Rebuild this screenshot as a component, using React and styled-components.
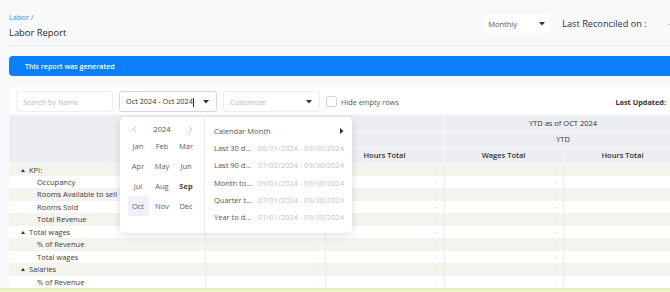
import React from 'react'
import styled, { createGlobalStyle } from 'styled-components'
import { ChevronLeft, ChevronRight } from 'lucide-react'

const GlobalStyle = createGlobalStyle`
    body {
        margin: 0;
        background: #f8f9fb;
        font-family: 'Open Sans', 'Noto Sans', sans-serif;
        overflow: hidden;
    }
`

const Page = styled.div`
    width: 670px;
    height: 292px;
    overflow: hidden;
    display: flex;
    flex-direction: column;
`

const Main = styled.div`
    padding-left: 9px;
    width: 673px;
    flex: 1;
`

// top bar with title + reconcile info
const Header = styled.div`
    display: flex;
    justify-content: space-between;
    border-bottom: 1px solid #e8eaed;
    height: 45px;
`

const TitleBlock = styled.div`
    padding-top: 12px;
`

const Crumb = styled.div`
    font-size: 7.4px;
    line-height: 11px;
    color: #3f8cf2;
`

const Title = styled.div`
    margin-top: 3px;
    font-size: 9.4px;
    line-height: 13px;
    color: #2a2a2a;
`

const HeaderRight = styled.div`
    display: flex;
    align-items: center;
    height: 19px;
    margin-top: 14px;
    margin-right: 11px;
    gap: 11px;
`

const PeriodSelect = styled.div`
    width: 68px;
    height: 19px;
    box-sizing: border-box;
    background: #fff;
    border-radius: 4px;
    display: flex;
    align-items: center;
    justify-content: space-between;
    padding: 0 6px 0 5px;
    font-size: 7.5px;
    color: #555;
`

const Reconciled = styled.div`
    font-size: 9.2px;
    color: #333;
`

const Muted = styled.span`
    margin-left: 19px;
    color: #aaa;
    font-size: 9px;
`

const Banner = styled.div`
    margin-top: 10px;
    height: 20px;
    background: #0b7ef9;
    border-radius: 4px 0 0 4px;
    display: flex;
    align-items: center;
    padding-left: 16px;
    font-size: 7.1px;
    font-weight: 600;
    color: #fff;
`

const Card = styled.div`
    margin-top: 11px;
    background: #fff;
    border-radius: 4px 0 0 0;
`

const Filters = styled.div`
    display: flex;
    align-items: center;
    gap: 6px;
    padding: 4px 16px 3px 7px;
`

const Field = styled.div`
    position: relative;
    width: ${p => p.w}px;
    height: 21px;
    box-sizing: border-box;
    border: 1px solid ${p => p.focus ? '#d3d4f4' : '#eceef1'};
    border-radius: 3px;
    display: flex;
    align-items: center;
    justify-content: space-between;
    padding: 0 7px 0 6px;
    font-size: 7.3px;
    color: ${p => p.muted ? '#b5b9c0' : '#333'};
`

const Cursor = styled.span`
    display: inline-block;
    width: 1px;
    height: 9px;
    background: #333;
    vertical-align: middle;
    margin-left: 0.5px;
`

const Check = styled.div`
    width: 11px;
    height: 11px;
    box-sizing: border-box;
    border: 1px solid #cfd2d7;
    border-radius: 2px;
    margin-right: -2px;
`

const CheckLabel = styled.span`
    font-size: 7.3px;
    color: #555;
`

const Updated = styled.span`
    margin-left: auto;
    font-size: 7.3px;
    font-weight: 700;
    color: #333;
`

// date range dropdown
const Popup = styled.div`
    position: absolute;
    left: 0px;
    top: 25px;
    width: 232px;
    height: 116px;
    background: #fff;
    border-radius: 5px;
    box-shadow: 0 2px 10px rgba(0, 0, 0, 0.13);
    display: flex;
    z-index: 5;
    color: #555;
    font-size: 7.5px;
`

const MonthPane = styled.div`
    width: 85px;
    border-right: 1px solid #eeeff1;
    padding: 5px 0 0 6px;
    box-sizing: border-box;
`

const YearNav = styled.div`
    display: grid;
    grid-template-columns: repeat(3, 28px);
    margin-left: -6px;
    height: 14px;
    align-items: center;
    justify-items: center;
    color: #555;
`

const MonthGrid = styled.div`
    display: grid;
    grid-template-columns: repeat(3, 24px);
    grid-auto-rows: 20px;
    justify-items: center;
    align-items: center;
`

const Month = styled.div`
    width: 21px;
    height: 20px;
    display: flex;
    align-items: center;
    justify-content: center;
    border-radius: 3px;
    background: ${p => p.active ? '#f0f0fb' : 'transparent'};
    font-weight: ${p => p.bold ? 700 : 400};
    color: ${p => p.bold ? '#444' : '#5e5e5e'};
`

const RangePane = styled.div`
    flex: 1;
    padding: 5px 9px 0 9px;
`

const RangeRow = styled.div`
    display: flex;
    align-items: center;
    height: 17.3px;
    justify-content: ${p => p.head ? 'space-between' : 'flex-start'};
`

const RangeLabel = styled.span`
    width: 44px;
    white-space: nowrap;
`

const RangeDates = styled.span`
    color: #c0c3c8;
    white-space: nowrap;
`

// report table
const Table = styled.table`
    border-collapse: collapse;
    table-layout: fixed;
    width: 673px;
    font-size: 7.5px;
    color: #333;
`

const Th = styled.th`
    background: #eceef1;
    height: 16px;
    padding: 0;
    font-weight: ${p => p.strong ? 600 : 400};
    border: 1px solid #f6f7f8;
    border-top: none;
    border-left: ${p => p.first ? 'none' : '1px solid #f6f7f8'};
    text-align: center;
    box-sizing: border-box;
`

const Tr = styled.tr`
    background: ${p => p.odd ? '#f4f4ef' : '#fff'};
    height: 12.5px;
`

const NameCell = styled.td`
    padding: 0 0 0 ${p => p.group ? 12 : 28}px;
    line-height: 12px;
    color: #3c3c3c;
    white-space: nowrap;
`

const Caret = styled.span`
    display: inline-block;
    width: 0;
    height: 0;
    border-left: 2.5px solid transparent;
    border-right: 2.5px solid transparent;
    border-bottom: 3px solid #333;
    margin-right: 4px;
    vertical-align: 1px;
`

const ValCell = styled.td`
    padding: 0 6px 0 0;
    text-align: right;
    line-height: 12px;
    font-size: 6px;
    color: #a7a7a7;
    border-left: 1px solid #ebebeb;
`

const Footer = styled.div`
    height: 4px;
    background: linear-gradient(#e6eeb4, #f2f6d0);
`

const DownCaret = () => (
    <svg width="6" height="4" viewBox="0 0 6 4">
        <path d="M0 0 L6 0 L3 3.5 Z" fill="#333" />
    </svg>
)

const RightCaret = () => (
    <svg width="4" height="6" viewBox="0 0 4 6">
        <path d="M0 0 L3.5 3 L0 6 Z" fill="#333" />
    </svg>
)

const months = ['Jan', 'Feb', 'Mar', 'Apr', 'May', 'Jun', 'Jul', 'Aug', 'Sep', 'Oct', 'Nov', 'Dec']

const ranges = [
    ['Last 30 d...', '08/31/2024 - 09/30/2024'],
    ['Last 90 d...', '07/02/2024 - 09/30/2024'],
    ['Month to...', '09/01/2024 - 09/30/2024'],
    ['Quarter t...', '07/01/2024 - 09/30/2024'],
    ['Year to d...', '01/01/2024 - 09/30/2024'],
]

// group rows have no indent + caret
const rows = [
    { name: 'KPI:', group: true },
    { name: 'Occupancy' },
    { name: 'Rooms Available to sell' },
    { name: 'Rooms Sold' },
    { name: 'Total Revenue' },
    { name: 'Total wages', group: true },
    { name: '% of Revenue' },
    { name: 'Total wages' },
    { name: 'Salaries', group: true },
    { name: '% of Revenue' },
]

const DatePicker = () => (
    <Popup>
        <MonthPane>
            <YearNav>
                <ChevronLeft size={9} strokeWidth={1.5} color="#888" />
                <span>2024</span>
                <ChevronRight size={9} strokeWidth={1.5} color="#888" />
            </YearNav>
            <MonthGrid>
                {months.map(m => (
                    <Month key={m} active={m === 'Oct'} bold={m === 'Sep'}>{m}</Month>
                ))}
            </MonthGrid>
        </MonthPane>
        <RangePane>
            <RangeRow head>
                <span>Calendar Month</span>
                <RightCaret />
            </RangeRow>
            {ranges.map(([label, dates]) => (
                <RangeRow key={label}>
                    <RangeLabel>{label}</RangeLabel>
                    <RangeDates>{dates}</RangeDates>
                </RangeRow>
            ))}
        </RangePane>
    </Popup>
)

const App = () => {
    return <Page>
        <GlobalStyle />
        <Main>
            <Header>
                <TitleBlock>
                    <Crumb>Labor /</Crumb>
                    <Title>Labor Report</Title>
                </TitleBlock>
                <HeaderRight>
                    <PeriodSelect>Monthly <DownCaret /></PeriodSelect>
                    <Reconciled>Last Reconciled on : <Muted>-</Muted></Reconciled>
                </HeaderRight>
            </Header>

            <Banner>This report was generated</Banner>

            <Card>
                <Filters>
                    <Field w={97} muted>Search by Name</Field>
                    <Field w={98} focus>
                        <span>Oct 2024 - Oct 2024<Cursor /></span>
                        <DownCaret />
                        <DatePicker />
                    </Field>
                    <Field w={97} muted>Customize <DownCaret /></Field>
                    <Check />
                    <CheckLabel>Hide empty rows</CheckLabel>
                    <Updated>Last Updated:</Updated>
                </Filters>

                <Table>
                    <colgroup>
                        <col style={{ width: 196 }} />
                        <col style={{ width: 120 }} />
                        <col style={{ width: 119 }} />
                        <col style={{ width: 119 }} />
                        <col style={{ width: 119 }} />
                    </colgroup>
                    <thead>
                        <tr>
                            <Th rowSpan={3} first />
                            <Th colSpan={2}>OCT 2024</Th>
                            <Th colSpan={2}>YTD as of OCT 2024</Th>
                        </tr>
                        <tr>
                            <Th colSpan={2}>MTD</Th>
                            <Th colSpan={2}>YTD</Th>
                        </tr>
                        <tr>
                            <Th strong>Wages Total</Th>
                            <Th strong>Hours Total</Th>
                            <Th strong>Wages Total</Th>
                            <Th strong>Hours Total</Th>
                        </tr>
                    </thead>
                    <tbody>
                        {rows.map((r, i) => (
                            <Tr key={i} odd={i % 2 === 0}>
                                <NameCell group={r.group}>
                                    {r.group && <Caret />}{r.name}
                                </NameCell>
                                <ValCell>-</ValCell>
                                <ValCell>-</ValCell>
                                <ValCell>-</ValCell>
                                <ValCell />
                            </Tr>
                        ))}
                    </tbody>
                </Table>
            </Card>
        </Main>
        <Footer />
    </Page>
}

export default App
